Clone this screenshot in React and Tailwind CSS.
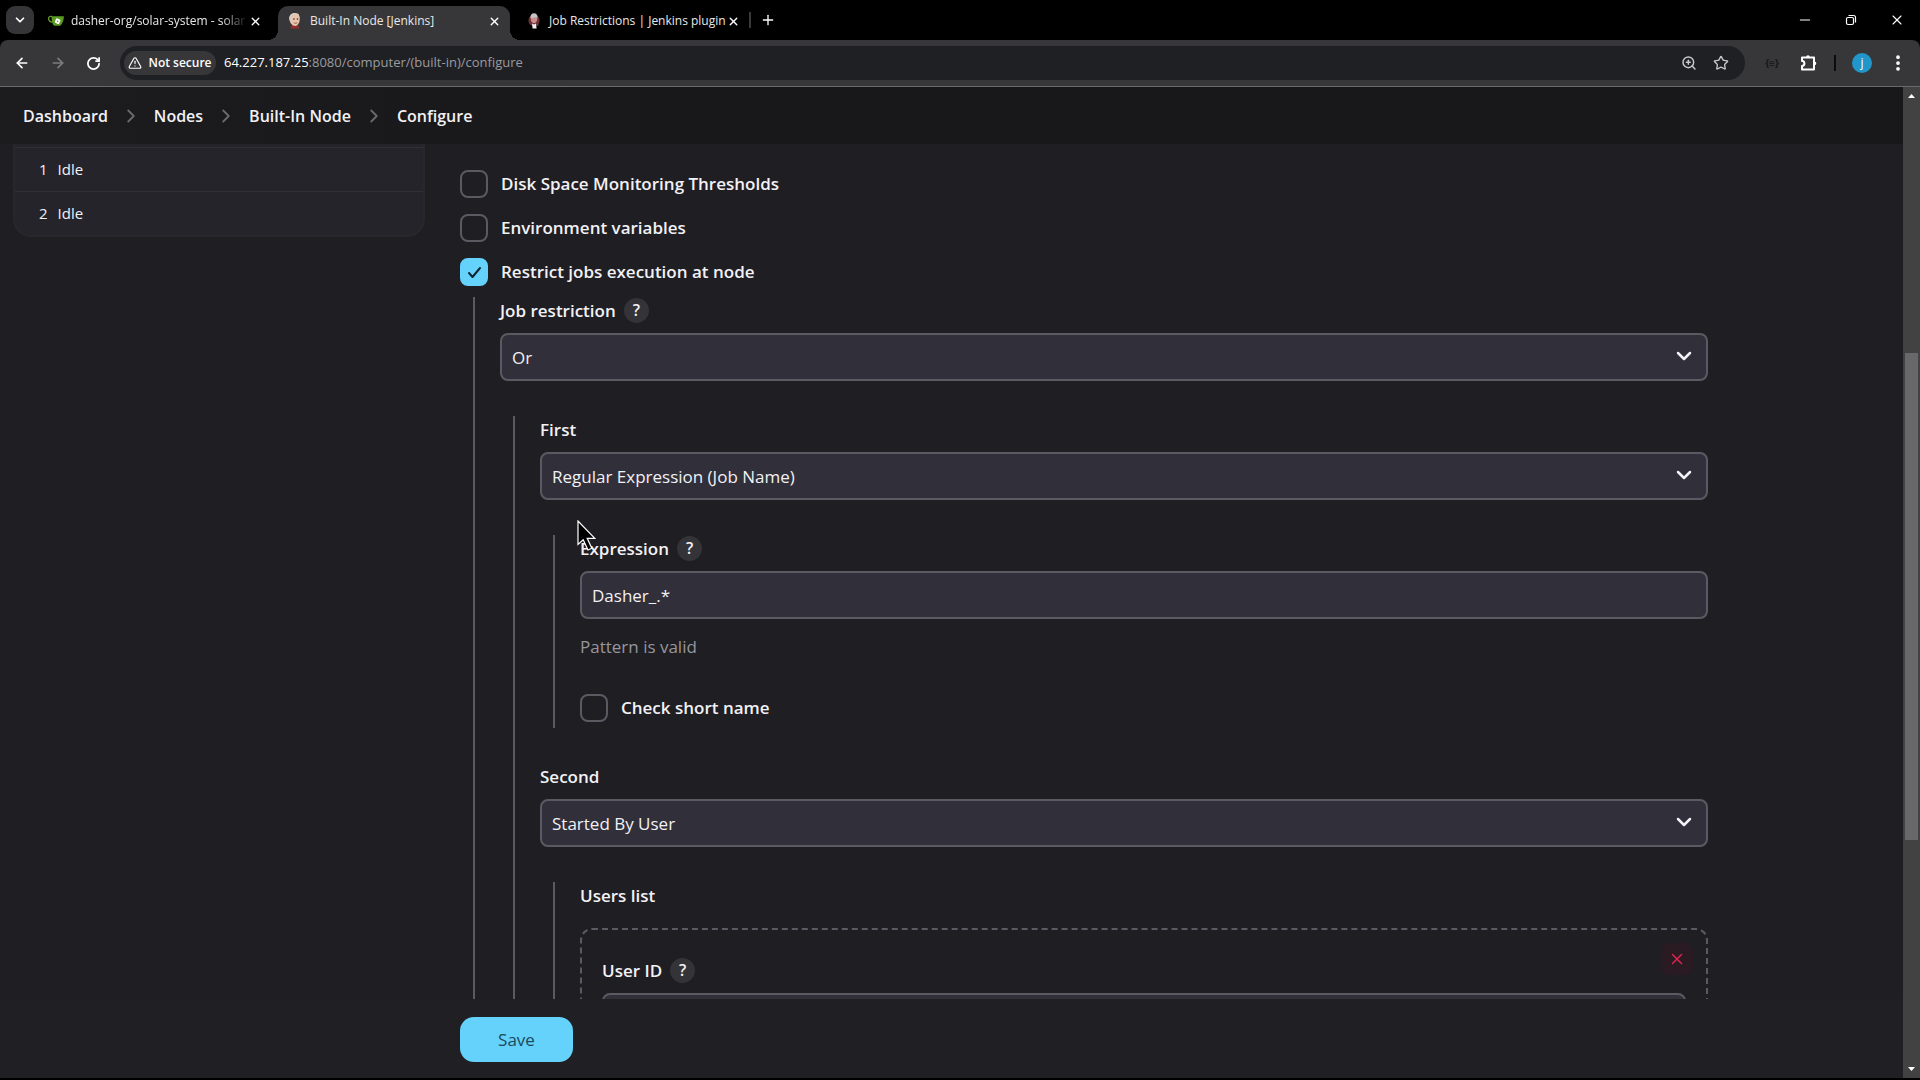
import { useState } from 'react'
import { ArrowLeft, ArrowRight, ChevronDown, ChevronRight, Minus, MoreVertical, Plus, RotateCw, Star, TriangleAlert, X, ZoomIn } from 'lucide-react'

const TABS = [
  { id: 'gitea', title: 'dasher-org/solar-system - solar', icon: GiteaIcon, faded: true },
  { id: 'node', title: 'Built-In Node [Jenkins]', icon: JenkinsIcon, active: true },
  { id: 'plugin', title: 'Job Restrictions | Jenkins plugin', icon: PluginIcon },
]

const CRUMBS = ['Dashboard', 'Nodes', 'Built-In Node', 'Configure']

function GiteaIcon() {
  return (
    <svg width="16" height="16" viewBox="0 0 16 16" className="shrink-0">
      <path d="M4 3.500C1.600 3.100.5 4 .6 5.600c.1 1.900 1.500 3.200 3.600 3.500" fill="none" stroke="#609926" strokeWidth="1.300" />
      <path d="M3.600 3.200h12.200c.2 2.800-.8 6-2.600 8.600-.4.6-1 .9-1.700.9H7c-.8 0-1.400-.3-1.800-1C4 9.600 3.400 6.300 3.600 3.200z" fill="#5a9a22" />
      <rect x="7.200" y="5.800" width="4.800" height="4.800" rx="1" fill="#fff" transform="rotate(25 9.600 8.200)" />
      <circle cx="9.600" cy="8.200" r=".8" fill="#609926" />
    </svg>
  )
}

function JenkinsIcon() {
  return (
    <svg width="16" height="16" viewBox="0 0 16 16" className="shrink-0">
      <path d="M3.500 14.500C4 12 6 10.800 8.500 11s3.600 2 3.900 4.800H4z" fill="#8a2f2c" />
      <path d="M2.400 5.500C2.400 2 4.800.2 7.800.2s5 1.900 5 5.100c0 4-1.700 7.700-4.600 7.700S2.400 9.500 2.400 5.500z" fill="#e9c4ac" />
      <path d="M2.300 6.500C1.900 2.500 4.200 0 7.800 0c2 0 3.700.7 4.600 2.200C10 1.500 7 1.600 5.400 3.200 4.500 4.200 4.300 6 3.600 7.800z" fill="#d7cbc0" />
      <circle cx="6.900" cy="6" r=".8" fill="#3b2420" />
      <circle cx="10.500" cy="6" r=".8" fill="#3b2420" />
      <path d="M6.800 9.600c1.100.9 2.400.9 3.500 0" fill="none" stroke="#7a3f35" strokeWidth=".8" />
    </svg>
  )
}

function PluginIcon() {
  return (
    <svg width="16" height="16" viewBox="0 0 16 16" className="shrink-0">
      <circle cx="8" cy="7.500" r="5.600" fill="#6f2f38" />
      <path d="M4.300 5C4.300 2 5.600.3 8 .3s3.600 1.700 3.600 4.500z" fill="#c9c3c6" />
      <path d="M4.700 5h6.600c.1 3-1.100 5.200-3.300 5.200S4.600 8 4.700 5z" fill="#c98f8c" />
      <path d="M6 10.500l2 1 2-1 .6 5H6.600z" fill="#f2eef0" />
      <path d="M11 10l2 2-2 1z" fill="#3f4f73" />
    </svg>
  )
}

function PuzzleIcon() {
  return (
    <svg width="18" height="18" viewBox="0 0 18 18" fill="none" stroke="#fff" strokeWidth="2" strokeLinejoin="round">
      <path d="M2 3.500h12v12H2v-3.600a2.400 2.400 0 0 0 0-4.800z" />
      <path d="M6.200 3a1.800 1.800 0 0 1 3.600 0zM14.500 7.600a1.800 1.800 0 0 1 0 3.600z" fill="#fff" stroke="none" />
    </svg>
  )
}

function Pointer() {
  return (
    <svg width="20" height="32" viewBox="0 0 20 32" className="absolute -left-[3px] -top-[15px] z-10">
      <path d="M1 1v23.500l5.200-4.800L11 30l3.800-1.700-4.600-10h7.600z" fill="#000" stroke="#fff" strokeWidth="1.200" />
    </svg>
  )
}

function Tab({ tab }) {
  const Icon = tab.icon
  return (
    <div className={`relative flex h-[34px] w-[232px] items-center pl-[9px] pr-2 pb-1 ${tab.active ? 'rounded-t-[10px] bg-[#373739]' : ''}`}>
      {tab.active && (
        <>
          <span className="absolute -left-2.5 bottom-0 h-2.5 w-2.5 bg-[radial-gradient(circle_at_0_0,transparent_10px,#373739_10px)]" />
          <span className="absolute -right-2.5 bottom-0 h-2.5 w-2.5 bg-[radial-gradient(circle_at_100%_0,transparent_10px,#373739_10px)]" />
        </>
      )}
      <Icon />
      <span className={`ml-[7px] flex-1 whitespace-nowrap text-xs text-[#e8e8e8] ${tab.faded ? 'mask-r-from-85%' : ''}`}>{tab.title}</span>
      <button aria-label="Close tab" className="p-px text-white">
        <X size={13} strokeWidth={2.500} />
      </button>
    </div>
  )
}

function BrowserChrome() {
  return (
    <header className="shrink-0 bg-black">
      <div className="flex h-10 items-end">
        <button aria-label="Search tabs" className="mb-1.5 ml-1.5 mr-[5px] flex h-7 w-7 items-center justify-center rounded-[9px] bg-[#353537] text-white">
          <ChevronDown size={14} strokeWidth={3} />
        </button>
        <div className="flex gap-[7px]">
          {TABS.map(tab => <Tab key={tab.id} tab={tab} />)}
        </div>
        <span className="mb-3 h-4 w-0.5 bg-[#3a3a3a]" />
        <button aria-label="New tab" className="mb-3 ml-[9px] text-white">
          <Plus size={16} strokeWidth={2} />
        </button>
        <div className="mb-3 ml-auto mr-[15px] flex items-center gap-[30px] text-white">
          <button aria-label="Minimize"><Minus size={16} strokeWidth={1.500} /></button>
          <button aria-label="Restore">
            <svg width="16" height="16" viewBox="0 0 16 16" fill="none" stroke="currentColor" strokeWidth="1.200">
              <rect x="3.500" y="5.500" width="7" height="7" rx="1.500" />
              <path d="M5.500 3.500h5a2 2 0 0 1 2 2v5" />
            </svg>
          </button>
          <button aria-label="Close"><X size={16} strokeWidth={1.600} /></button>
        </div>
      </div>
      <div className="flex h-[47px] items-center rounded-t-lg border-b border-[#6a6a6c] bg-[#373739] pr-3 text-white">
        <div className="flex w-[120px] items-center gap-5 pl-3.5">
          <button aria-label="Back"><ArrowLeft size={16} strokeWidth={2.500} /></button>
          <button aria-label="Forward" className="text-[#7d7d80]"><ArrowRight size={16} strokeWidth={2.500} /></button>
          <button aria-label="Reload"><RotateCw size={15} strokeWidth={2.800} /></button>
        </div>
        <div className="flex h-[34px] flex-1 items-center rounded-full bg-[#1f2024] pl-1 pr-4">
          <button className="flex h-6 w-[92px] items-center justify-center gap-1.5 rounded-full bg-[#37373a] text-xs font-semibold">
            <TriangleAlert size={14} strokeWidth={2} />
            Not secure
          </button>
          <span className="ml-2 flex-1 text-[13px] text-[#9b9b9f]"><span className="text-white">64.227.187.25</span>:8080/computer/(built-in)/configure</span>
          <div className="flex items-center gap-4 text-[#c8c8ca]">
            <button aria-label="Zoom"><ZoomIn size={16} strokeWidth={2.200} /></button>
            <button aria-label="Bookmark"><Star size={16} strokeWidth={2} /></button>
          </div>
        </div>
        <button aria-label="Extension" className="ml-[19px] w-4 text-[10px] font-bold text-[#161618]">{'{≡}'}</button>
        <button aria-label="Extensions" className="ml-5"><PuzzleIcon /></button>
        <span className="ml-4 h-4 w-0.5 bg-[#0c0c0c]" />
        <button className="ml-4 h-5 w-5 rounded-full bg-[#2196c9] text-xs leading-5">j</button>
        <button aria-label="Menu" className="ml-4"><MoreVertical size={20} strokeWidth={2.500} /></button>
      </div>
    </header>
  )
}

function Label({ htmlFor, children, help }) {
  return (
    <div className="mb-[9px] flex h-[27px] items-center gap-2">
      <label htmlFor={htmlFor} className="font-semibold">{children}</label>
      {help && (
        <button type="button" aria-label="Help" className="h-[25px] w-[25px] rounded-full bg-[#343438] text-base font-semibold leading-[25px]">?</button>
      )}
    </div>
  )
}

function SelectField({ id, value }) {
  return (
    <div className="relative">
      <select id={id} className="block h-12 w-full appearance-none rounded-lg border-2 border-[#5b5a62] bg-[#312f39] px-2.5 pt-0.5">
        <option>{value}</option>
      </select>
      <ChevronDown size={24} strokeWidth={2.500} className="pointer-events-none absolute right-3 top-[11px]" />
    </div>
  )
}

function Checkbox({ id, label, defaultChecked = false }) {
  const [checked, setChecked] = useState(defaultChecked)
  return (
    <div className="flex h-7 items-center">
      <span className="relative mr-[13px] h-7 w-7">
        <input
          id={id}
          type="checkbox"
          checked={checked}
          onChange={e => setChecked(e.target.checked)}
          className="block h-7 w-7 appearance-none rounded-lg border-2 border-[#5b5a62] checked:border-[#64d2fb] checked:bg-[#64d2fb]"
        />
        {checked && (
          <svg viewBox="0 0 28 28" className="pointer-events-none absolute inset-0" fill="none" stroke="#10242e" strokeWidth="2" strokeLinecap="round" strokeLinejoin="round">
            <path d="M9 15l3.500 4L20 10" />
          </svg>
        )}
      </span>
      <label htmlFor={id} className="font-semibold">{label}</label>
    </div>
  )
}

function Nested({ children, className = '' }) {
  return <div className={`ml-[13px] border-l-2 border-[#5b5a62] pl-[25px] ${className}`}>{children}</div>
}

function NodeForm() {
  return (
    <form className="w-full max-w-[1248px] pt-[26px]">
      <div className="flex flex-col gap-4">
        <Checkbox id="disk" label="Disk Space Monitoring Thresholds" />
        <Checkbox id="env" label="Environment variables" />
        <Checkbox id="restrict" label="Restrict jobs execution at node" defaultChecked />
      </div>

      <Nested className="mt-[11px]">
        <Label htmlFor="restriction" help>Job restriction</Label>
        <SelectField id="restriction" value="Or" />

        <Nested className="mt-[35px]">
          <Label htmlFor="first">First</Label>
          <SelectField id="first" value="Regular Expression (Job Name)" />

          <Nested className="mt-[35px] pb-1.5">
            <div className="relative">
              <Label htmlFor="expression" help>Expression</Label>
              <Pointer />
            </div>
            <input id="expression" type="text" defaultValue="Dasher_.*" className="block h-12 w-full rounded-lg border-2 border-[#5b5a62] bg-[#312f39] px-2.5" />
            <p className="mb-[33px] mt-3.5 leading-7 text-[#97969c]">Pattern is valid</p>
            <Checkbox id="short-name" label="Check short name" />
          </Nested>

          <div className="mt-[35px]">
            <Label htmlFor="second">Second</Label>
            <SelectField id="second" value="Started By User" />
          </div>

          <Nested className="mt-[35px]">
            <h3 className="mb-[19px] leading-[27px] font-semibold">Users list</h3>
            <div className="relative rounded-xl border-2 border-dashed border-[#5b5a62] px-5 pb-5 pt-[27px]">
              <button type="button" aria-label="Remove user" className="absolute right-[13px] top-[13px] flex h-8 w-8 items-center justify-center rounded-lg bg-[#2a1a22] text-[#e0234e]">
                <X size={18} strokeWidth={2} />
              </button>
              <Label htmlFor="user-id" help>User ID</Label>
              <input id="user-id" type="text" className="block h-12 w-full rounded-lg border-2 border-[#5b5a62] bg-[#312f39] px-2.5" />
            </div>
          </Nested>
        </Nested>
      </Nested>
    </form>
  )
}

function Scrollbar() {
  return (
    <div className="flex w-[17px] shrink-0 flex-col items-center bg-[#424242]">
      <svg width="17" height="18" viewBox="0 0 17 18"><path d="M5 11l3.500-4 3.500 4z" fill="#fff" /></svg>
      <div className="flex w-full flex-1 flex-col">
        <div className="h-[26%]" />
        <div className="ml-0.5 h-[51%] w-[13px] bg-[#686769]" />
      </div>
      <svg width="17" height="18" viewBox="0 0 17 18"><path d="M5 7l3.500 4L12 7z" fill="#fff" /></svg>
    </div>
  )
}

export default function App() {
  return (
    <div className="flex h-screen flex-col bg-black pb-0.5 font-['Open_Sans','Noto_Sans',sans-serif]">
      <BrowserChrome />
      <div className="flex min-h-0 flex-1">
        <div className="flex min-w-0 flex-1 flex-col bg-[#1f1e23] text-[17px] text-[#f2f1f5]">
          <nav className="flex h-[57px] shrink-0 items-center gap-3 bg-linear-to-r from-[#1c1c1e] to-[#18181a] to-35% px-[23px] text-base font-semibold">
            {CRUMBS.map((crumb, i) => (
              <div key={crumb} className="flex items-center gap-3">
                {i > 0 && <ChevronRight size={22} strokeWidth={2} className="text-[#6b6b6f]" />}
                <a href="#">{crumb}</a>
              </div>
            ))}
          </nav>

          <div className="flex min-h-0 flex-1 items-start gap-[35px] overflow-hidden pl-[13px]">
            <aside className="w-[412px] shrink-0 rounded-b-[18px] border-x-2 border-b-2 border-[#28272c] bg-[#25242a] pt-[3px] text-[15px]">
              {[1, 2].map(n => (
                <div key={n} className="flex h-11 items-center gap-2.5 border-t border-[#302f35] pl-6">
                  <span>{n}</span>
                  <span>Idle</span>
                </div>
              ))}
            </aside>
            <NodeForm />
          </div>

          <footer className="flex h-[79px] shrink-0 items-center bg-[#202024] pl-[460px] pt-0.5">
            <button className="h-[45px] w-[113px] rounded-[14px] bg-[#64d2fb] text-[#1d4a5c]">Save</button>
          </footer>
        </div>
        <Scrollbar />
      </div>
    </div>
  )
}
